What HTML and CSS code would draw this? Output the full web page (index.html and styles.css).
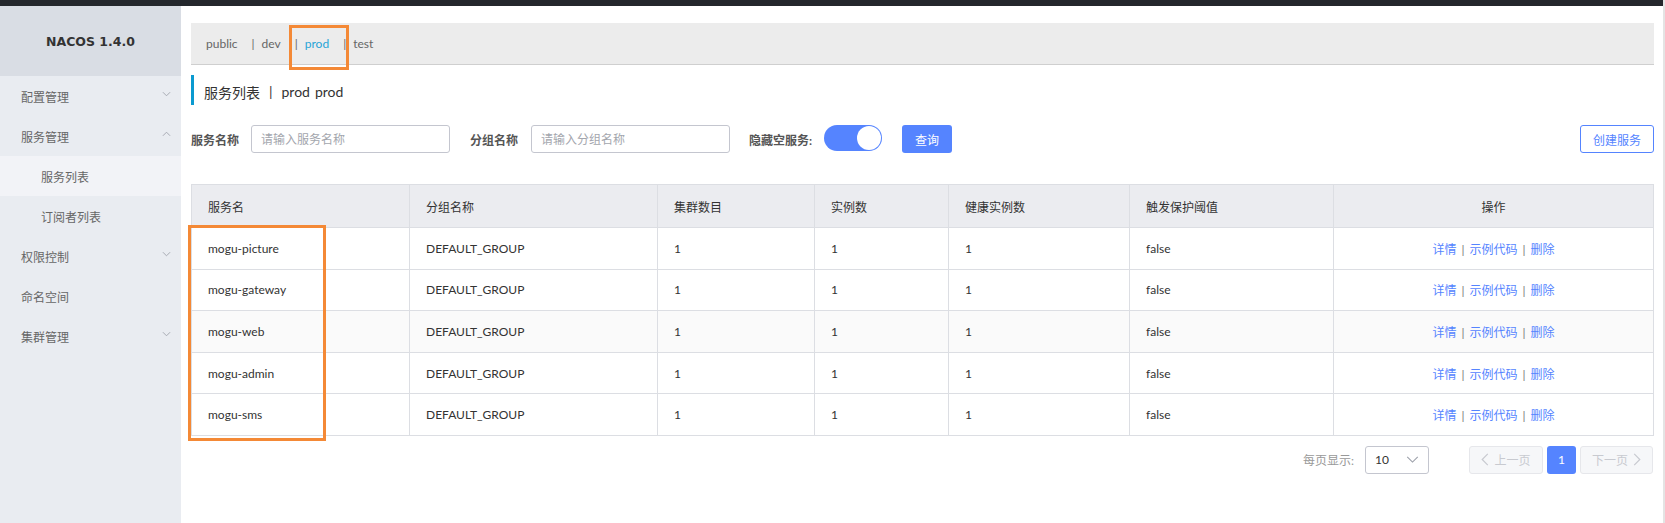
FILE: index.html
```html
<!DOCTYPE html>
<html lang="zh-CN">
<head>
<meta charset="utf-8">
<title>Nacos</title>
<link rel="stylesheet" href="styles.css">
</head>
<body>
<div class="page">
  <div class="topbar"></div>
  <div class="layout">
    <aside class="sidebar">
      <div class="brand">NACOS 1.4.0</div>
      <ul class="menu">
        <li class="item">配置管理<svg class="chev" viewBox="0 0 10 6"><path d="M1 1 L5 5 L9 1" fill="none" stroke="#a0a4ad" stroke-width="1"/></svg></li>
        <li class="item">服务管理<svg class="chev" viewBox="0 0 10 6"><path d="M1 5 L5 1 L9 5" fill="none" stroke="#a0a4ad" stroke-width="1"/></svg></li>
        <li class="item sub active">服务列表</li>
        <li class="item sub">订阅者列表</li>
        <li class="item">权限控制<svg class="chev" viewBox="0 0 10 6"><path d="M1 1 L5 5 L9 1" fill="none" stroke="#a0a4ad" stroke-width="1"/></svg></li>
        <li class="item">命名空间</li>
        <li class="item">集群管理<svg class="chev" viewBox="0 0 10 6"><path d="M1 1 L5 5 L9 1" fill="none" stroke="#a0a4ad" stroke-width="1"/></svg></li>
      </ul>
    </aside>
    <main class="main">
      <div class="tabs">
        <span class="tab">public</span>
        <span class="tab"><span class="sep">|</span>dev</span>
        <span class="tab current"><span class="sep">|</span>prod</span>
        <span class="tab"><span class="sep">|</span>test</span>
      </div>
      <div class="title">
        <span>服务列表</span><span class="tsep">|</span><span>prod</span><span class="tgap">prod</span>
      </div>
      <div class="search">
        <label class="lbl">服务名称</label>
        <input class="inp" placeholder="请输入服务名称">
        <label class="lbl lbl2">分组名称</label>
        <input class="inp" placeholder="请输入分组名称">
        <label class="lbl lbl3">隐藏空服务:</label>
        <span class="switch"><span class="knob"></span></span>
        <button class="btn primary">查询</button>
        <button class="btn outline">创建服务</button>
      </div>
      <table class="grid">
        <colgroup>
          <col style="width:218px"><col style="width:248px"><col style="width:157px"><col style="width:134px"><col style="width:181px"><col style="width:204px"><col>
        </colgroup>
        <thead>
          <tr><th>服务名</th><th>分组名称</th><th>集群数目</th><th>实例数</th><th>健康实例数</th><th>触发保护阈值</th><th class="center">操作</th></tr>
        </thead>
        <tbody>
          <tr><td>mogu-picture</td><td>DEFAULT_GROUP</td><td>1</td><td>1</td><td>1</td><td>false</td><td class="center ops"><a>详情</a><span class="osep">|</span><a>示例代码</a><span class="osep">|</span><a>删除</a></td></tr>
          <tr><td>mogu-gateway</td><td>DEFAULT_GROUP</td><td>1</td><td>1</td><td>1</td><td>false</td><td class="center ops"><a>详情</a><span class="osep">|</span><a>示例代码</a><span class="osep">|</span><a>删除</a></td></tr>
          <tr class="hover"><td>mogu-web</td><td>DEFAULT_GROUP</td><td>1</td><td>1</td><td>1</td><td>false</td><td class="center ops"><a>详情</a><span class="osep">|</span><a>示例代码</a><span class="osep">|</span><a>删除</a></td></tr>
          <tr><td>mogu-admin</td><td>DEFAULT_GROUP</td><td>1</td><td>1</td><td>1</td><td>false</td><td class="center ops"><a>详情</a><span class="osep">|</span><a>示例代码</a><span class="osep">|</span><a>删除</a></td></tr>
          <tr><td>mogu-sms</td><td>DEFAULT_GROUP</td><td>1</td><td>1</td><td>1</td><td>false</td><td class="center ops"><a>详情</a><span class="osep">|</span><a>示例代码</a><span class="osep">|</span><a>删除</a></td></tr>
        </tbody>
      </table>
      <div class="pager">
        <span class="pl">每页显示:</span>
        <span class="select">10<svg class="selchev" viewBox="0 0 14 8"><path d="M1 1 L7 7 L13 1" fill="none" stroke="#9a9ea8" stroke-width="1.2"/></svg></span>
        <span class="pbtn prev"><svg class="pchev" viewBox="0 0 8 14"><path d="M7 1 L1 7 L7 13" fill="none" stroke="#c8cad0" stroke-width="1.3"/></svg>上一页</span>
        <span class="pnum">1</span>
        <span class="pbtn next">下一页<svg class="pchev" viewBox="0 0 8 14"><path d="M1 1 L7 7 L1 13" fill="none" stroke="#c8cad0" stroke-width="1.3"/></svg></span>
      </div>
    </main>
  </div>
  <div class="mark mark-tab"></div>
  <div class="mark mark-col"></div>
</div>
</body>
</html>
```

FILE: styles.css
```css
* { box-sizing: border-box; }
html, body { margin: 0; padding: 0; }
body {
  font-family: "Lato", "Noto Sans CJK SC", sans-serif;
  font-size: 12px;
  color: #333;
  background: #fff;
}
.page {
  position: relative;
  width: 1665px;
  height: 523px;
  overflow: hidden;
  border-right: 2px solid #e4e4e4;
}
.topbar {
  height: 6px;
  background: #24272c;
}
.layout {
  display: flex;
  height: 517px;
}
.sidebar {
  width: 181px;
  flex: none;
  background: #e9ecf1;
}
.brand {
  height: 70px;
  background: #d9dde4;
  display: flex;
  align-items: center;
  justify-content: center;
  font-family: "DejaVu Sans", sans-serif;
  font-weight: bold;
  font-size: 12.5px;
  color: #333;
}
.menu {
  list-style: none;
  margin: 0;
  padding: 0;
}
.item {
  height: 40px;
  display: flex;
  align-items: center;
  padding-left: 21px;
  padding-right: 10px;
  color: #666;
  font-size: 12px;
  position: relative;
}
.item.sub { padding-left: 41px; }
.item.active { background: #f2f3f7; }
.chev {
  width: 9px;
  height: 6px;
  margin-left: auto;
  margin-top: -4px;
}
.main {
  flex: 1;
  padding: 17px 9px 0 10px;
}
.tabs {
  height: 42px;
  background: #ececec;
  border-bottom: 1px solid #cfcfcf;
  display: flex;
  align-items: center;
  gap: 14px;
  padding-left: 15px;
  color: #666;
}
.tab .sep { margin-right: 7px; color: #666; position: relative; z-index: 2; }
.tab.current { color: #27a4d7; }
.tab.current .sep { color: #666; }
.title {
  margin-top: 10px;
  height: 30px;
  border-left: 3px solid #0b9ad0;
  padding-left: 10px;
  padding-top: 3px;
  display: flex;
  align-items: center;
  font-size: 14px;
  color: #333;
}
.tsep { margin: 0 9px 0 9px; }
.tgap { margin-left: 5px; }
.search {
  margin-top: 20px;
  height: 28px;
  display: flex;
  align-items: center;
}
.lbl {
  font-weight: bold;
  color: #555;
  font-size: 12px;
  margin-right: 12px;
}
.lbl2 { margin-left: 20px; margin-right: 13px; }
.lbl3 { margin-left: 19px; margin-right: 12px; }
.inp {
  width: 199px;
  height: 28px;
  border: 1px solid #c4c6cf;
  border-radius: 3px;
  padding: 0 9px;
  font-family: inherit;
  font-size: 12px;
  color: #333;
  outline: none;
}
.inp::placeholder { color: #a3a6ad; }
.switch {
  width: 58px;
  height: 26px;
  border-radius: 13px;
  background: #5584ff;
  position: relative;
  margin-top: -2px;
}
.knob {
  position: absolute;
  right: 1px;
  top: 1px;
  width: 24px;
  height: 24px;
  border-radius: 50%;
  background: #fff;
}
.btn {
  height: 28px;
  border-radius: 3px;
  font-family: inherit;
  font-size: 12px;
  padding: 0;
  cursor: pointer;
}
.btn.primary {
  width: 50px;
  margin-left: 20px;
  background: #5584ff;
  border: none;
  color: #fff;
}
.btn.outline {
  width: 74px;
  margin-left: auto;
  background: #fff;
  border: 1px solid #5584ff;
  color: #5584ff;
}
.grid {
  margin-top: 31px;
  width: 1463px;
  border-collapse: collapse;
  table-layout: fixed;
  border: 1px solid #dcdee3;
}
.grid th, .grid td {
  border: 1px solid #dcdee3;
  text-align: left;
  padding: 0 0 0 16px;
  font-weight: normal;
  color: #333;
  font-size: 12px;
}
.grid th {
  background: #ebecf0;
  height: 43px;
}
.grid td { height: 41.6px; }
.grid .center { text-align: center; padding-left: 0; }
.grid tr.hover td { background: #fafafa; }
.ops a { color: #5584ff; }
.osep { color: #777; margin: 0 5px; }
.pager {
  margin-top: 10px;
  height: 28px;
  display: flex;
  align-items: center;
  justify-content: flex-end;
  padding-right: 1px;
}
.pl { color: #999; margin-right: 11px; }
.select {
  width: 64px;
  height: 28px;
  border: 1px solid #c4c6cf;
  border-radius: 3px;
  display: flex;
  align-items: center;
  padding-left: 9px;
  color: #333;
  margin-right: 40px;
}
.selchev { width: 13px; height: 7px; margin-left: auto; margin-right: 9px; }
.pbtn {
  height: 28px;
  border: 1px solid #e6e7eb;
  background: #f6f7f9;
  border-radius: 3px;
  display: flex;
  align-items: center;
  justify-content: center;
  gap: 5px;
  color: #c8cad0;
}
.prev { width: 74px; }
.next { width: 73px; }
.pchev { width: 8px; height: 13px; }
.pnum {
  width: 29px;
  height: 28px;
  margin: 0 4px;
  border-radius: 3px;
  background: #5584ff;
  color: #fff;
  display: flex;
  align-items: center;
  justify-content: center;
}
.mark {
  position: absolute;
  z-index: 1;
  border: 3px solid #f48936;
}
.mark-tab { left: 289px; top: 25px; width: 60px; height: 45px; }
.mark-col { left: 188px; top: 225px; width: 138px; height: 216px; }
```
